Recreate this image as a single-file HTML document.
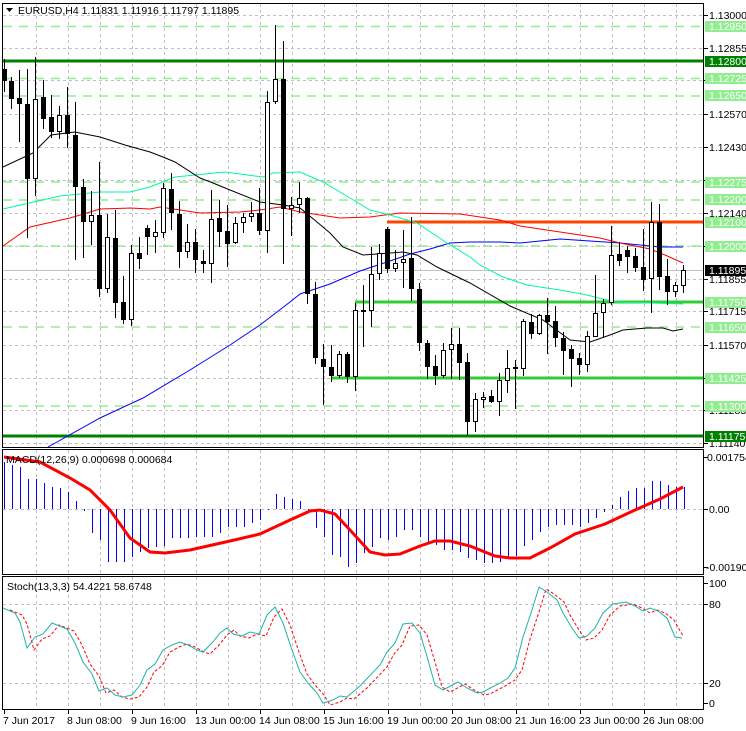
<!DOCTYPE html>
<html><head><meta charset="utf-8"><style>
html,body{margin:0;padding:0;background:#fff;}
svg{display:block;font-family:"Liberation Sans",sans-serif;font-size:10.5px;}
</style></head><body>
<svg width="746" height="731" viewBox="0 0 746 731" xmlns="http://www.w3.org/2000/svg">
<rect width="746" height="731" fill="#fff"/>
<!-- vertical grid -->
<g stroke="#c0c0c0" stroke-dasharray="3,3" stroke-width="1">
<path d="M36.5 4V447M68.5 4V447M100.5 4V447M132.5 4V447M164.5 4V447M196.5 4V447M228.5 4V447M260.5 4V447M292.5 4V447M324.5 4V447M356.5 4V447M388.5 4V447M420.5 4V447M452.5 4V447M484.5 4V447M516.5 4V447M548.5 4V447M580.5 4V447M612.5 4V447M644.5 4V447M676.5 4V447"/>
<path d="M36.5 450V574M68.5 450V574M100.5 450V574M132.5 450V574M164.5 450V574M196.5 450V574M228.5 450V574M260.5 450V574M292.5 450V574M324.5 450V574M356.5 450V574M388.5 450V574M420.5 450V574M452.5 450V574M484.5 450V574M516.5 450V574M548.5 450V574M580.5 450V574M612.5 450V574M644.5 450V574M676.5 450V574"/>
<path d="M36.5 577V709M68.5 577V709M100.5 577V709M132.5 577V709M164.5 577V709M196.5 577V709M228.5 577V709M260.5 577V709M292.5 577V709M324.5 577V709M356.5 577V709M388.5 577V709M420.5 577V709M452.5 577V709M484.5 577V709M516.5 577V709M548.5 577V709M580.5 577V709M612.5 577V709M644.5 577V709M676.5 577V709"/>
<!-- horizontal grid main -->
<path d="M3 15.5H704M3 48.5H704M3 80.5H704M3 114.5H704M3 147.5H704M3 180.5H704M3 213.5H704M3 246.5H704M3 279.5H704M3 311.5H704M3 345.5H704M3 378.5H704M3 410.5H704M3 443.5H704"/>
<path d="M3 509.5H704M3 604.5H704M3 683.5H704"/>
</g>
<!-- light green dashed levels -->
<g stroke="#90ee90" stroke-width="1.5" stroke-dasharray="9,7">
<path d="M3 26.5H704M3 78.5H704M3 96H704M3 182H704M3 200H704M3 246H704M3 327H704M3 406H704"/>
</g>
<!-- current price line -->
<path d="M3 270.5H704" stroke="#c0c0c0" stroke-width="1"/>
<!-- solid levels -->
<path d="M3 61H704M3 436H704" stroke="#008000" stroke-width="3"/>
<path d="M355 302H704M331 378H704" stroke="#32cd32" stroke-width="3"/>
<path d="M387 222H704" stroke="#ff4500" stroke-width="3"/>
<!-- MAs -->
<g fill="none" stroke-width="1">
<polyline stroke="#0000ff" points="48,447 100,418 143,398 190,370 230,345 260,325 290,302 300,294 330,284 360,271 390,261 410,254 430,249 450,243 470,242 500,242 520,243 540,241 560,239 590,241 620,243 640,245 660,247 683,247"/>
<polyline stroke="#ff0000" points="3,246 30,227 70,218 100,209 130,208 150,209 160,207 200,213 240,212 260,210 280,207 300,212 340,218 370,217 400,213 460,214 500,220 520,226 560,232 600,238 620,243 650,249 665,255 683,263"/>
<polyline stroke="#00fa9a" points="3,209 60,196 100,192 130,192 150,187 175,177 195,175 225,172 240,174 263,177 273,173 300,172 323,182 350,198 370,210 390,215 417,223 447,243 470,257 480,265 503,277 527,285 560,290 587,295 607,300 617,302 683,304"/>
<polyline stroke="#000" points="3,167 33,153 51,135 75,132 100,137 125,145 150,152 163,157 175,162 200,178 213,183 230,190 260,202 283,205 300,208 317,222 330,233 343,247 363,255 377,254 403,252 417,255 437,267 470,283 510,306 543,320 570,340 590,342 610,335 623,330 647,328 663,328 673,331 683,329"/>
</g>
<!-- candles -->
<g stroke="#000" stroke-width="1">
<path d="M4.5 59V92M11.5 77V109M19.5 70V142M27.5 69V238M35.5 57V196M43.5 80V129M51.5 95V138M59.5 106V139M67.5 87V148M75.5 102V260M83.5 179V258M91.5 191V245M99.5 162V297M107.5 214V293M115.5 210V318M123.5 276V324M131.5 245V326M139.5 237V269M147.5 225V255M155.5 220V253M163.5 183V238M171.5 173V230M179.5 201V268M187.5 224V258M195.5 229V273M203.5 250V273M211.5 190V283M219.5 200V247M227.5 205V267M235.5 217V244M243.5 213V233M251.5 202V222M259.5 188V235M267.5 91V253M275.5 25V104M283.5 41V264M291.5 197V236M299.5 182V213M307.5 197V304M315.5 282V364M323.5 344V405M331.5 345V382M339.5 351V378M347.5 352V383M355.5 303V391M363.5 285V347M371.5 247V327M379.5 244V280M387.5 227V273M395.5 250V272M403.5 230V288M411.5 217V301M419.5 283V351M427.5 340V379M435.5 355V385M443.5 343V378M451.5 328V379M459.5 328V380M467.5 353V435M475.5 393V432M483.5 392V408M491.5 390V403M499.5 373V416M507.5 350V393M515.5 360V409M523.5 319V376M531.5 314V339M539.5 314V335M547.5 298V354M555.5 306V347M563.5 332V375M571.5 345V387M579.5 353V375M587.5 331V372M595.5 275V337M603.5 299V337M611.5 226V305M619.5 242V266M627.5 246V273M635.5 248V272M643.5 229V291M651.5 202V313M659.5 204V290M667.5 259V305M675.5 282V297M683.5 265V293"/>
</g>
<g fill="#000">
<rect x="2" y="69" width="5" height="12"/><rect x="9" y="81" width="5" height="18"/><rect x="17" y="98" width="5" height="6"/><rect x="25" y="104" width="5" height="75"/><rect x="41" y="97" width="5" height="22"/><rect x="49" y="117" width="5" height="15"/><rect x="65" y="115" width="5" height="19"/><rect x="73" y="135" width="5" height="52"/><rect x="81" y="187" width="5" height="35"/><rect x="97" y="215" width="5" height="74"/><rect x="113" y="238" width="5" height="65"/><rect x="121" y="302" width="5" height="18"/><rect x="137" y="253" width="5" height="6"/><rect x="145" y="228" width="5" height="9"/><rect x="169" y="189" width="5" height="24"/><rect x="177" y="214" width="5" height="38"/><rect x="193" y="242" width="5" height="18"/><rect x="201" y="261" width="5" height="3"/><rect x="217" y="218" width="5" height="14"/><rect x="225" y="231" width="5" height="13"/><rect x="257" y="213" width="5" height="18"/><rect x="281" y="79" width="5" height="130"/><rect x="305" y="198" width="5" height="96"/><rect x="313" y="294" width="5" height="64"/><rect x="321" y="359" width="5" height="8"/><rect x="329" y="367" width="5" height="9"/><rect x="345" y="354" width="5" height="23"/><rect x="361" y="310" width="5" height="2"/><rect x="385" y="229" width="5" height="40"/><rect x="409" y="258" width="5" height="31"/><rect x="417" y="289" width="5" height="54"/><rect x="425" y="343" width="5" height="24"/><rect x="433" y="366" width="5" height="10"/><rect x="457" y="344" width="5" height="19"/><rect x="465" y="362" width="5" height="60"/><rect x="489" y="396" width="5" height="6"/><rect x="513" y="367" width="5" height="2"/><rect x="529" y="322" width="5" height="12"/><rect x="545" y="315" width="5" height="7"/><rect x="553" y="321" width="5" height="17"/><rect x="561" y="338" width="5" height="13"/><rect x="569" y="349" width="5" height="10"/><rect x="577" y="358" width="5" height="7"/><rect x="617" y="254" width="5" height="7"/><rect x="625" y="250" width="5" height="7"/><rect x="633" y="256" width="5" height="12"/><rect x="641" y="267" width="5" height="13"/><rect x="657" y="222" width="5" height="55"/><rect x="665" y="276" width="5" height="16"/>
</g>
<g fill="#fff" stroke="#000" stroke-width="1">
<rect x="33.5" y="99.5" width="4" height="79"/><rect x="57.5" y="115.5" width="4" height="16"/><rect x="89.5" y="215.5" width="4" height="6"/><rect x="105.5" y="237.5" width="4" height="51"/><rect x="129.5" y="253.5" width="4" height="66"/><rect x="153.5" y="232.5" width="4" height="4"/><rect x="161.5" y="188.5" width="4" height="44"/><rect x="185.5" y="242.5" width="4" height="9"/><rect x="209.5" y="219.5" width="4" height="44"/><rect x="233.5" y="223.5" width="4" height="19"/><rect x="241.5" y="217.5" width="4" height="5"/><rect x="249.5" y="213.5" width="4" height="3"/><rect x="265.5" y="102.5" width="4" height="128"/><rect x="273.5" y="79.5" width="4" height="22"/><rect x="289.5" y="205.5" width="4" height="3"/><rect x="297.5" y="198.5" width="4" height="6"/><rect x="337.5" y="354.5" width="4" height="21"/><rect x="353.5" y="310.5" width="4" height="66"/><rect x="369.5" y="274.5" width="4" height="36"/><rect x="377.5" y="253.5" width="4" height="20"/><rect x="393.5" y="263.5" width="4" height="5"/><rect x="401.5" y="259.5" width="4" height="3"/><rect x="441.5" y="350.5" width="4" height="25"/><rect x="449.5" y="344.5" width="4" height="5"/><rect x="473.5" y="399.5" width="4" height="22"/><rect x="481.5" y="397.5" width="4" height="2"/><rect x="497.5" y="380.5" width="4" height="21"/><rect x="505.5" y="368.5" width="4" height="12"/><rect x="521.5" y="321.5" width="4" height="47"/><rect x="537.5" y="315.5" width="4" height="18"/><rect x="585.5" y="336.5" width="4" height="28"/><rect x="593.5" y="313.5" width="4" height="23"/><rect x="601.5" y="303.5" width="4" height="9"/><rect x="609.5" y="255.5" width="4" height="47"/><rect x="649.5" y="222.5" width="4" height="56"/><rect x="673.5" y="285.5" width="4" height="6"/><rect x="681.5" y="270.5" width="4" height="15"/>
</g>
<!-- MACD histogram -->
<path stroke="#0000ff" stroke-width="1" d="M4.5 509V462M12.5 509V465M20.5 509V467M28.5 509V479M36.5 509V479M44.5 509V483M52.5 509V487M60.5 509V488M68.5 509V492M76.5 509V501M84.5 509V511M92.5 509V533M100.5 509V540M108.5 509V562M116.5 509V562M124.5 509V562M132.5 509V557M140.5 509V552M148.5 509V548M156.5 509V547M164.5 509V546M172.5 509V538M180.5 509V538M188.5 509V538M196.5 509V537M204.5 509V537M212.5 509V537M220.5 509V533M228.5 509V527M236.5 509V527M244.5 509V527M252.5 509V523M260.5 509V520M268.5 509V510M276.5 509V494M284.5 509V497M292.5 509V499M300.5 509V501M308.5 509V510M316.5 509V528M324.5 509V537M332.5 509V555M340.5 509V557M348.5 509V567M356.5 509V563M364.5 509V553M372.5 509V547M380.5 509V538M388.5 509V540M396.5 509V537M404.5 509V530M412.5 509V530M420.5 509V537M428.5 509V543M436.5 509V545M444.5 509V550M452.5 509V550M460.5 509V552M468.5 509V558M476.5 509V560M484.5 509V563M492.5 509V563M500.5 509V562M508.5 509V557M516.5 509V556M524.5 509V546M532.5 509V540M540.5 509V532M548.5 509V527M556.5 509V525M564.5 509V525M572.5 509V525M580.5 509V527M588.5 509V523M596.5 509V518M604.5 509V512M612.5 509V505M620.5 509V497M628.5 509V491M636.5 509V488M644.5 509V488M652.5 509V481M660.5 509V481M668.5 509V485M676.5 509V487M684.5 509V487"/>
<polyline fill="none" stroke="#ff0000" stroke-width="3" points="4,457 40,462 70,478 90,490 110,510 130,538 150,552 165,553 190,550 230,541 260,534 290,520 310,511 320,510 335,514 350,530 370,552 385,555 400,554 420,546 435,541 450,541 470,546 495,556 510,558 530,558 550,548 575,534 605,524 635,510 660,499 683,487"/>
<!-- Stoch -->
<polyline fill="none" stroke="#ff0000" stroke-width="1" stroke-dasharray="3,2" transform="translate(7,2)" points="3,608 15,613 20,622 27,648 35,637 43,634 52,623 67,629 75,643 83,662 92,674 99,691 107,688 115,695 123,697 132,695 140,685 147,670 155,664 163,650 172,645 180,642 188,645 197,650 203,652 212,643 220,633 227,628 233,634 242,636 250,632 259,634 267,615 275,607 283,623 292,650 300,672 308,683 317,693 323,703 333,700 340,696 347,697 360,686 380,665 387,652 395,643 403,624 412,623 420,633 428,660 435,685 443,690 458,682 467,688 477,693 483,692 500,683 508,678 515,668 523,637 532,610 539,587 547,592 557,600 563,613 572,628 579,638 587,636 595,628 603,613 613,604 626,602 635,606 643,611 650,608 658,611 667,618 676,634"/>
<polyline fill="none" stroke="#20b2aa" stroke-width="1" points="3,608 15,613 20,622 27,648 35,637 43,634 52,623 67,629 75,643 83,662 92,674 99,691 107,688 115,695 123,697 132,695 140,685 147,670 155,664 163,650 172,645 180,642 188,645 197,650 203,652 212,643 220,633 227,628 233,634 242,636 250,632 259,634 267,615 275,607 283,623 292,650 300,672 308,683 317,693 323,703 333,700 340,696 347,697 360,686 380,665 387,652 395,643 403,624 412,623 420,633 428,660 435,685 443,690 458,682 467,688 477,693 483,692 500,683 508,678 515,668 523,637 532,610 539,587 547,592 557,600 563,613 572,628 579,638 587,636 595,628 603,613 613,604 626,602 635,606 643,611 650,608 658,611 667,618 675,637 682,638"/>
<!-- frames -->
<g fill="none" stroke="#000" stroke-width="1">
<rect x="2.5" y="3.5" width="701" height="444"/>
<rect x="2.5" y="449.5" width="701" height="125"/>
<rect x="2.5" y="576.5" width="701" height="133"/>
</g>
<!-- axis ticks -->
<path stroke="#000" d="M704 15.5h4M704 48.5h4M704 80.5h4M704 114.5h4M704 147.5h4M704 180.5h4M704 213.5h4M704 246.5h4M704 279.5h4M704 311.5h4M704 345.5h4M704 378.5h4M704 410.5h4M704 443.5h4M704 457.5h4M704 509.5h4M704 567.5h4M704 583.5h4M704 604.5h4M704 683.5h4M704 703.5h4M4.5 710v4M68.5 710v4M132.5 710v4M196.5 710v4M260.5 710v4M324.5 710v4M388.5 710v4M452.5 710v4M516.5 710v4M580.5 710v4M644.5 710v4"/>
<g fill="#000">
<text x="709" y="19">1.13000</text><text x="709" y="52">1.12855</text><text x="709" y="84">1.12715</text><text x="709" y="118">1.12570</text><text x="709" y="151">1.12430</text><text x="709" y="184">1.12285</text><text x="709" y="217">1.12140</text><text x="709" y="283">1.11855</text><text x="709" y="315">1.11715</text><text x="709" y="349">1.11570</text><text x="709" y="414">1.11285</text><text x="709" y="447">1.11140</text>
<text x="707" y="461">0.001754</text><text x="709" y="513">0.00</text><text x="706" y="571">-0.001907</text>
<text x="709" y="587">100</text><text x="709" y="608">80</text><text x="709" y="687">20</text><text x="709" y="707">0</text>
</g>
<!-- label boxes -->
<g fill="#90ee90">
<rect x="705" y="21" width="41" height="11"/><rect x="705" y="73" width="41" height="11"/><rect x="705" y="90" width="41" height="11"/><rect x="705" y="177" width="41" height="11"/><rect x="705" y="194" width="41" height="11"/><rect x="705" y="217" width="41" height="11"/><rect x="705" y="241" width="41" height="11"/><rect x="705" y="297" width="41" height="11"/><rect x="705" y="322" width="41" height="11"/><rect x="705" y="373" width="41" height="11"/><rect x="705" y="401" width="41" height="11"/>
</g>
<rect x="705" y="56" width="41" height="11" fill="#008000"/><rect x="705" y="431" width="41" height="11" fill="#008000"/>
<rect x="705" y="265" width="41" height="11" fill="#000"/>
<g fill="#fff">
<text x="709" y="30">1.12950</text><text x="709" y="65">1.12800</text><text x="709" y="82">1.12725</text><text x="709" y="99">1.12650</text><text x="709" y="186">1.12275</text><text x="709" y="203">1.12200</text><text x="709" y="226">1.12100</text><text x="709" y="250">1.12000</text><text x="709" y="274">1.11895</text><text x="709" y="306">1.11750</text><text x="709" y="331">1.11650</text><text x="709" y="382">1.11425</text><text x="709" y="410">1.11300</text><text x="709" y="440">1.11175</text>
</g>
<!-- header texts -->
<path d="M6 8h7l-3.5 4z" fill="#000"/>
<text x="18" y="14" fill="#000">EURUSD,H4  1.11831 1.11916 1.11797 1.11895</text>
<text x="6" y="463" fill="#000">MACD(12,26,9) 0.000698 0.000684</text>
<text x="7" y="590" fill="#000">Stoch(13,3,3) 54.4221 58.6748</text>
<g fill="#000">
<text x="3" y="724">7 Jun 2017</text><text x="67" y="724">8 Jun 08:00</text><text x="131" y="724">9 Jun 16:00</text><text x="195" y="724">13 Jun 00:00</text><text x="259" y="724">14 Jun 08:00</text><text x="323" y="724">15 Jun 16:00</text><text x="387" y="724">19 Jun 00:00</text><text x="451" y="724">20 Jun 08:00</text><text x="515" y="724">21 Jun 16:00</text><text x="579" y="724">23 Jun 00:00</text><text x="643" y="724">26 Jun 08:00</text>
</g>
</svg>
</body></html>
